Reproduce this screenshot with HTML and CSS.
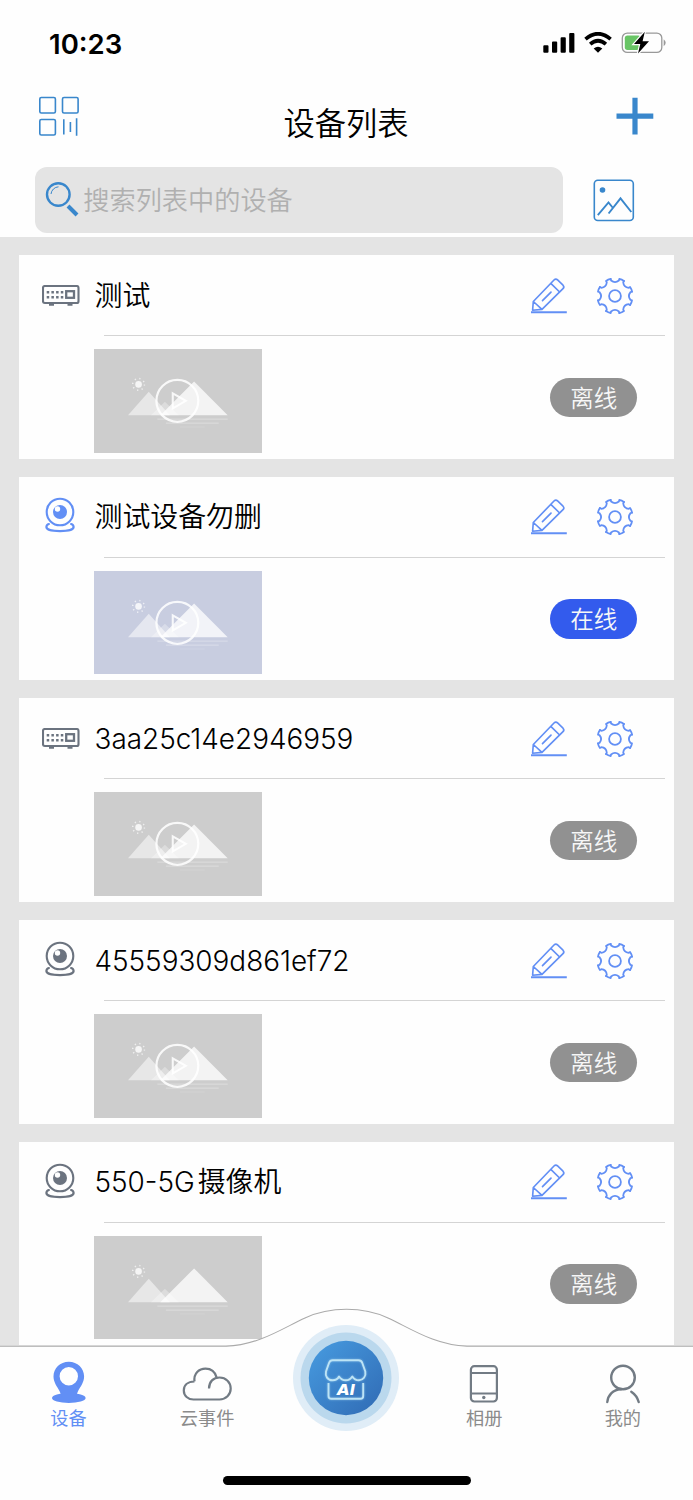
FILE: index.html
```html
<!DOCTYPE html>
<html lang="zh-CN">
<head>
<meta charset="utf-8">
<title>设备列表</title>
<link rel="stylesheet" href="styles.css">
</head>
<body>
<svg class="sprite" width="0" height="0" aria-hidden="true">
  <defs>
    <symbol id="nvr" viewBox="0 0 38 22">
      <path d="M7 18.300h5v2.400H7zM25.500 18.300h5v2.400h-5z" fill="currentColor"/>
      <rect x="1" y="1" width="35.500" height="17" rx="1.800" fill="none" stroke="currentColor" stroke-width="2.100"/>
      <path d="M4.700 7.300h17.500M4.700 12.300h17.500" stroke="currentColor" stroke-width="2.500" stroke-dasharray="2.500 2.200"/>
      <rect x="24.200" y="6.200" width="7.800" height="6.600" fill="none" stroke="currentColor" stroke-width="2.300"/>
    </symbol>
    <symbol id="cam" viewBox="0 0 30 36">
      <circle cx="15" cy="15" r="13.300" fill="none" stroke="currentColor" stroke-width="2.100"/>
      <circle cx="15" cy="15" r="7" fill="currentColor"/>
      <circle cx="12.500" cy="12" r="2.700" fill="#fefefe"/>
      <path d="M3.900 27C2.100 27.500 1.400 28.700 1.400 30C1.400 32.500 7 34.100 15 34.100S28.600 32.500 28.600 30C28.600 28.700 27.900 27.500 26.100 27" fill="none" stroke="currentColor" stroke-width="2.200" stroke-linecap="round"/>
    </symbol>
    <symbol id="pencil" viewBox="0 0 37 38">
      <path d="M3.300 24.500L24 3Q25.800 1.200 27.600 2.900L33 8.200Q34.700 10 33 11.700L12 32.400L2.600 33.200ZM3.300 24.500L12 32.400M20.800 6.300L29.600 15M12.500 23.600L21 15.100" fill="none" stroke="#628ff5" stroke-width="1.650" stroke-linejoin="round" stroke-linecap="round"/>
      <path d="M1 35.300h35.800" stroke="#628ff5" stroke-width="1.900"/>
    </symbol>
    <symbol id="gear" viewBox="-19 -19 38 38">
      <g fill="none" stroke="#628ff5" stroke-width="1.800" stroke-linejoin="round" stroke-linecap="round">
        <g id="tooth"><path d="M-4.300-17L-3.900-15.500Q0-12.300 3.900-15.500L4.300-17Q6.800-16.600 9-15.100"/></g>
        <use href="#tooth" transform="rotate(45)"/><use href="#tooth" transform="rotate(90)"/>
        <use href="#tooth" transform="rotate(135)"/><use href="#tooth" transform="rotate(180)"/>
        <use href="#tooth" transform="rotate(225)"/><use href="#tooth" transform="rotate(270)"/>
        <use href="#tooth" transform="rotate(315)"/>
        <circle r="5.900"/>
      </g>
    </symbol>
    <symbol id="scene" viewBox="0 0 168 104">
      <g fill="#fff">
        <circle cx="44.600" cy="35.500" r="3.300" opacity=".8"/>
        <circle cx="44.600" cy="35.500" r="5.900" fill="none" stroke="#fff" stroke-width="1.500" stroke-dasharray="1.300 3.334" opacity=".65"/>
        <path d="M34 66.500L54.800 43L76 66.500z" opacity=".52"/>
        <path d="M57 66.500L71 53L85 66.500z" opacity=".3"/>
        <path d="M66.500 66.500L100.300 32.500L134 66.500z" opacity=".76"/>
        <path d="M63.500 69.800h70.500v1.200H63.500zM72 73.800h53v1.200H72z" opacity=".28"/>
        <path d="M86 77.700h25v1H86z" opacity=".13"/>
      </g>
    </symbol>
    <symbol id="play" viewBox="0 0 168 104">
      <circle cx="83.500" cy="52" r="21" fill="none" stroke="#fff" stroke-opacity=".85" stroke-width="2.300"/>
      <path d="M78.900 44.500L92 52L78.900 59.600z" fill="none" stroke="#fff" stroke-opacity=".85" stroke-width="2.100"/>
    </symbol>
  </defs>
</svg>

<div class="screen">
  <div class="top">
    <div class="status">
      <span class="time">10:23</span>
      <svg width="125" height="24" viewBox="0 0 125 24">
        <path d="M.3 14.300q0-1 1-1h3.200q1 0 1 1v5.400q0 1-1 1H1.300q-1 0-1-1zM9 10.600q0-1 1-1h3.200q1 0 1 1v9.100q0 1-1 1H10q-1 0-1-1zM17.600 6.300q0-1 1-1h3.200q1 0 1 1v13.400q0 1-1 1h-3.200q-1 0-1-1zM26.200 2q0-1 1-1h3.200q1 0 1 1v17.700q0 1-1 1h-3.200q-1 0-1-1z"/>
        <g fill="none" stroke="#000" stroke-width="3.700"><path d="M42.500 7.100Q55-3.600 67.600 7.100M47.200 12.200Q55 5.200 62.900 12.200"/></g>
        <path d="M55 20.700L50.700 16.400Q55 13.100 59.300 16.400z"/>
        <rect x="79.300" y="1.100" width="39.500" height="19.300" rx="5" fill="none" stroke="#999" stroke-width="1.300"/>
        <path d="M120.700 7.200q4 3.400 0 7z" fill="#999"/>
        <rect x="81.800" y="3.500" width="16" height="14.500" rx="2.700" fill="#68c565"/>
        <path d="M101.800-.2L91 12h6.300L95 21.500L106 9.300H99.600z" fill="#000" stroke="#fefefe" stroke-width="2.400" paint-order="stroke"/>
      </svg>
    </div>
    <div class="titlebar">
      <svg class="scan" width="42" height="42" viewBox="0 0 42 42" fill="none" stroke="#3987cc" stroke-width="1.600">
        <rect x="1.800" y="1.500" width="15.600" height="15.500" rx="1.500"/><rect x="24.500" y="1.500" width="15.600" height="15.500" rx="1.500"/><rect x="1.800" y="23.500" width="15.600" height="15.500" rx="1.500"/>
        <path d="M25.800 23.200v15.200M32.400 26v10M38.600 22.300v17.500"/>
      </svg>
      <h1>设备列表</h1>
      <svg class="plus" width="38" height="38" viewBox="0 0 38 38"><path d="M19 .8v36.600M.5 19.200h36.800" stroke="#3987cc" stroke-width="5.200"/></svg>
    </div>
    <div class="searchrow">
      <div class="search">
        <svg width="34" height="37" viewBox="0 0 34 37" fill="none" stroke="#3987cc">
          <circle cx="13.300" cy="13.500" r="11.300" stroke-width="2.400"/>
          <path d="M6 13A8 8 0 0 1 13.500 5.800" stroke-width="1"/>
          <path d="M23 25L32 34" stroke-width="4"/>
        </svg>
        <span>搜索列表中的设备</span>
      </div>
      <svg class="album" width="42" height="43" viewBox="0 0 42 43" fill="none" stroke="#3987cc" stroke-width="1.900">
        <rect x="1.300" y="1.300" width="39" height="40.200" rx="3.500" stroke-width="1.600"/>
        <circle cx="9.500" cy="11" r="2.800" fill="#3987cc" stroke="none"/>
        <path d="M4.800 36.200L15.500 23.500L20 29M15.600 34.500L27.500 19.300L38.300 33"/>
      </svg>
    </div>
  </div>

  <div class="list">
    <div class="card">
      <div class="head"><div class="kind"><svg class="nvr"><use href="#nvr"/></svg></div><span class="name">测试</span><svg class="pencil"><use href="#pencil"/></svg><svg class="gear"><use href="#gear"/></svg></div>
      <div class="body"><svg class="thumb"><use href="#scene"/><use href="#play"/></svg><span class="pill">离线</span></div>
    </div>
    <div class="card">
      <div class="head"><div class="kind on"><svg class="cam"><use href="#cam"/></svg></div><span class="name">测试设备勿删</span><svg class="pencil"><use href="#pencil"/></svg><svg class="gear"><use href="#gear"/></svg></div>
      <div class="body"><svg class="thumb on"><use href="#scene"/><use href="#play"/></svg><span class="pill on">在线</span></div>
    </div>
    <div class="card">
      <div class="head"><div class="kind"><svg class="nvr"><use href="#nvr"/></svg></div><span class="name">3aa25c14e2946959</span><svg class="pencil"><use href="#pencil"/></svg><svg class="gear"><use href="#gear"/></svg></div>
      <div class="body"><svg class="thumb"><use href="#scene"/><use href="#play"/></svg><span class="pill">离线</span></div>
    </div>
    <div class="card">
      <div class="head"><div class="kind"><svg class="cam"><use href="#cam"/></svg></div><span class="name">45559309d861ef72</span><svg class="pencil"><use href="#pencil"/></svg><svg class="gear"><use href="#gear"/></svg></div>
      <div class="body"><svg class="thumb"><use href="#scene"/><use href="#play"/></svg><span class="pill">离线</span></div>
    </div>
    <div class="card">
      <div class="head"><div class="kind"><svg class="cam"><use href="#cam"/></svg></div><span class="name">550-5G<span class="cjk">摄像机</span></span><svg class="pencil"><use href="#pencil"/></svg><svg class="gear"><use href="#gear"/></svg></div>
      <div class="body"><svg class="thumb"><use href="#scene"/></svg><span class="pill">离线</span></div>
    </div>
  </div>

  <div class="nav">
    <svg class="wave" width="693" height="192" viewBox="0 0 693 192">
      <path d="M-2 38.300H226C259 37 283 20 305 10C319 3.500 333 1.300 346.500 1.300S374 3.500 388 10C410 20 434 37 467 38.300H695V195H-2z" fill="#fefefe" stroke="#aaa" stroke-width="1.100"/>
    </svg>
    <div class="tabs">
      <div class="tab active">
        <svg width="36" height="44" viewBox="0 0 36 44" fill="#628ff5"><ellipse cx="17.800" cy="37" rx="16.800" ry="5"/><path fill-rule="evenodd" d="M17.800.7C9 .7 2.500 7.200 2.500 15.500c0 5.500 3.500 10 6 14.500q1.500 3 2 6h14.600q.5-3 2-6c2.500-4.500 6-9 6-14.500C33.100 7.200 26.600.7 17.800.7zM17.800 6a9.200 9.200 0 1 1 0 18.400a9.200 9.200 0 0 1 0-18.400z"/></svg>
        <span>设备</span>
      </div>
      <div class="tab">
        <svg width="50" height="44" viewBox="0 0 50 44" fill="none" stroke="#727b84" stroke-width="2.200"><path d="M12.500 20.500C11.500 12.500 17 7.700 23.500 7.700C29 7.700 33 10.500 34.700 16.600M27 27.500C27 20.500 31.500 16.500 37.500 16.500C44 16.500 48.700 21.300 48.700 27.500S44 38.500 37.500 38.500H11.500C6 38.500 1.800 34.700 1.800 29.500S5.500 20.600 12.500 20.500"/></svg>
        <span>云事件</span>
      </div>
      <div class="tab store">
        <svg width="108" height="108" viewBox="0 0 108 108">
          <defs>
            <linearGradient id="disc" x1="0" y1="0" x2="1" y2="1"><stop offset=".1" stop-color="#4597dc"/><stop offset=".9" stop-color="#326fb8"/></linearGradient>
            <filter id="glow" x="-20%" y="-20%" width="140%" height="140%"><feGaussianBlur stdDeviation=".8"/></filter>
          </defs>
          <circle cx="54" cy="54" r="53" fill="#e0edf7"/>
          <circle cx="54" cy="54" r="45.500" fill="#bad8ed"/>
          <circle cx="54" cy="54" r="37.200" fill="url(#disc)"/>
          <g id="shop" fill="none" stroke="#bde4f5" stroke-width="1.900" stroke-linejoin="round">
            <path d="M40.500 36.300H66.500Q69.300 36.300 70.300 39L73.300 47.500C74.300 52.500 71 56.300 67 56.300C64 56.300 61.500 54.500 60.300 52.500C58.500 55.500 56 56.300 53.700 56.300S49 55.500 47 52.500C45.500 55.500 43 56.300 40.500 56.300C35.500 56.300 33 52 34 47.500L37 39Q38 36.300 40.500 36.300z"/>
            <path d="M36.500 59V72Q36.500 74.800 39.300 74.800H68.500Q71.200 74.800 71.200 72V59"/>
          </g>
          <use href="#shop" filter="url(#glow)" opacity=".5"/>
          <text x="53.500" y="71" text-anchor="middle" class="ai" textLength="18" lengthAdjust="spacingAndGlyphs">AI</text>
        </svg>
      </div>
      <div class="tab">
        <svg width="30" height="44" viewBox="0 0 30 44" fill="none" stroke="#727b84" stroke-width="2.200"><rect x="1.900" y="5.200" width="26" height="35.300" rx="3.500"/><path d="M2 12h26M2 32.500h26" stroke-width="1.800"/><circle cx="14.800" cy="36.500" r="1.700" fill="#727b84" stroke="none"/></svg>
        <span>相册</span>
      </div>
      <div class="tab">
        <svg width="36" height="44" viewBox="0 0 36 44" fill="none" stroke="#727b84" stroke-width="2.400" stroke-linecap="round"><circle cx="18" cy="16.500" r="11.800"/><path d="M2.300 41C3 34 8 28.500 16 28.200M26.300 30.700Q32 34.500 33.700 41"/></svg>
        <span>我的</span>
      </div>
    </div>
    <div class="home"></div>
  </div>
</div>
</body>
</html>
```
FILE: styles.css
```css
* { box-sizing: border-box; }
body { margin: 0; font-family: Inter, "Noto Sans CJK SC", sans-serif; color: #000; }
svg { display: block; flex: none; }
.sprite { position: absolute; }
.screen { position: relative; width: 693px; height: 1500px; overflow: hidden; background: #e4e4e4; }

.top { height: 237px; background: #fefefe; }
.status { height: 86px; padding: 1px 25px 0 49px; display: flex; align-items: center; justify-content: space-between; }
.time { font-size: 27.500px; font-weight: 600; line-height: 34px; }
.titlebar { height: 80.500px; padding: 10px 39px 0 38px; display: grid; grid-template-columns: 1fr auto 1fr; align-items: start; }
.titlebar h1 { margin: 7px 0 0; font-size: 31.300px; font-weight: 350; line-height: 42px; }
.plus { justify-self: end; margin-top: 1px; }
.searchrow { display: flex; align-items: center; gap: 30px; padding-left: 35.300px; }
.search { width: 528px; height: 66.500px; border-radius: 12px; background: #e4e4e4; display: flex; align-items: center; gap: 4.500px; padding-left: 9.500px; color: #b0b0b0; font-size: 26.200px; font-weight: 350; }
.search span { margin-top: -2px; }
.album { margin-top: 1px; }

.list { padding: 18px 18.700px 0; display: flex; flex-direction: column; gap: 18.200px; }
.card { height: 203.500px; flex: none; background: #fefefe; }
.head { height: 81px; display: flex; align-items: center; position: relative; }
.head::after { content: ""; position: absolute; left: 85px; right: 9.500px; bottom: 0; height: 1.200px; background: #d4d4d4; }
.kind { width: 75.800px; padding-left: 23px; color: #6b737f; }
.kind.on { color: #628ff5; }
.nvr { width: 38px; height: 22px; }
.cam { width: 30px; height: 36px; margin: -3.500px 0 0 3px; }
.name { flex: 1; font-size: 27.900px; font-weight: 350; line-height: 40px; white-space: nowrap; }
.cjk { margin-left: 3px; }
.pencil { width: 37px; height: 38px; }
.gear { width: 38px; height: 38px; margin: 0 40.300px 0 29px; }
.body { display: flex; justify-content: space-between; padding: 13px 37.300px 0 75.600px; }
.thumb { width: 167.700px; height: 103.700px; background: #cdcdcd; }
.thumb.on { background: #c8cde0; }
.pill { width: 87.500px; height: 39.500px; margin-top: 28.500px; padding-left: 1px; border-radius: 20px; background: #919191; color: #f7f7f7; font-size: 23.500px; font-weight: 350; line-height: 42px; text-align: center; }
.pill.on { background: #335bed; }

.nav { position: absolute; left: 0; right: 0; bottom: 0; height: 192px; display: flex; flex-direction: column; align-items: center; }
.wave { position: absolute; left: 0; top: 0; }
.tabs { position: relative; width: 693px; height: 140px; display: grid; grid-template-columns: repeat(5, 138.600px); }
.tab { display: flex; flex-direction: column; align-items: center; padding: 52.500px 1.600px 0 0; color: #8b8b8b; font-size: 18.200px; line-height: 26px; }
.tab.active { color: #628ff5; }
.tab.store { padding: 15.700px 0 0; }
.ai { font: italic 800 15px Inter, sans-serif; fill: #fff; }
.home { position: relative; width: 248px; height: 9px; margin-top: 27.500px; border-radius: 5px; background: #000; }
```
